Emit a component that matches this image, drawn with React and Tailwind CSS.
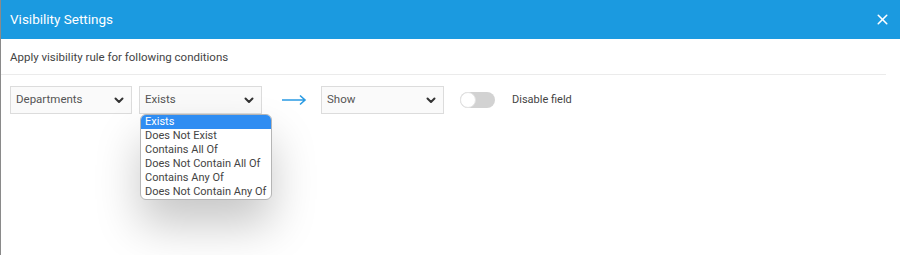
import { X } from 'lucide-react'

const options = [
  'Exists',
  'Does Not Exist',
  'Contains All Of',
  'Does Not Contain All Of',
  'Contains Any Of',
  'Does Not Contain Any Of',
]

function Chevron() {
  return (
    <svg width="10" height="7" viewBox="0 0 10 7" className="shrink-0">
      <path d="M1.5 1.5 L5 5 L8.5 1.5" fill="none" stroke="#333" strokeWidth="2" strokeLinecap="round" strokeLinejoin="round" />
    </svg>
  )
}

function Select({ value, className = '', children }) {
  return (
    <div className={`relative ${className}`}>
      <div className="h-[28px] flex items-center justify-between pl-[5px] pr-[7px] bg-[#fafafa] border border-[#dcdcdc] text-[11.5px] text-[#555]">
        <span>{value}</span>
        <Chevron />
      </div>
      {children}
    </div>
  )
}

export default function App() {
  return (
    <div className="w-[900px] h-[255px] bg-white border-l border-[#8a8a8a] overflow-hidden font-['Roboto',sans-serif]">
      <div className="h-[39px] bg-[#1b9ae0] flex items-center justify-between pl-[9px] pr-[9px]">
        <h1 className="text-white text-[13.5px]">Visibility Settings</h1>
        <X size={17} color="#fff" strokeWidth={2.2} />
      </div>

      <div className="mr-[14px] border-b border-[#ebebeb] h-[36px] flex items-center pl-[9px] pt-[2px]">
        <p className="text-[11.5px] text-[#444]">Apply visibility rule for following conditions</p>
      </div>

      <div className="flex items-center pl-[9px] pt-[11px]">
        <Select value="Departments" className="w-[122px]" />
        <Select value="Exists" className="w-[123px] ml-[7px]">
          <div className="absolute left-[1px] top-[28px] w-[132px] bg-white border border-[#b5b5b5] rounded-[6px] overflow-hidden shadow-[0_25px_45px_rgba(0,0,0,0.22)] text-[11px] text-[#444] leading-[14px] z-10">
            {options.map((o, i) => (
              <div
                key={o}
                className={`pl-[4px] h-[14px] whitespace-nowrap ${i === 0 ? 'bg-[#2f8df2] text-white' : ''}`}
              >
                {o}
              </div>
            ))}
          </div>
        </Select>
        <svg width="26" height="12" viewBox="0 0 26 12" className="ml-[19px] mr-[14px]">
          <path d="M1 6 H24 M19 1.5 L24 6 L19 10.5" fill="none" stroke="#2a9be3" strokeWidth="1.6" />
        </svg>
        <Select value="Show" className="w-[123px]" />
        <div className="ml-[16px] w-[35px] h-[16px] rounded-full bg-[#d2d2d2] relative">
          <div className="absolute left-0 top-0 w-[16px] h-[16px] rounded-full bg-white border border-[#e3e3e3]" />
        </div>
        <span className="ml-[17px] text-[11px] text-[#444]">Disable field</span>
      </div>
    </div>
  )
}
